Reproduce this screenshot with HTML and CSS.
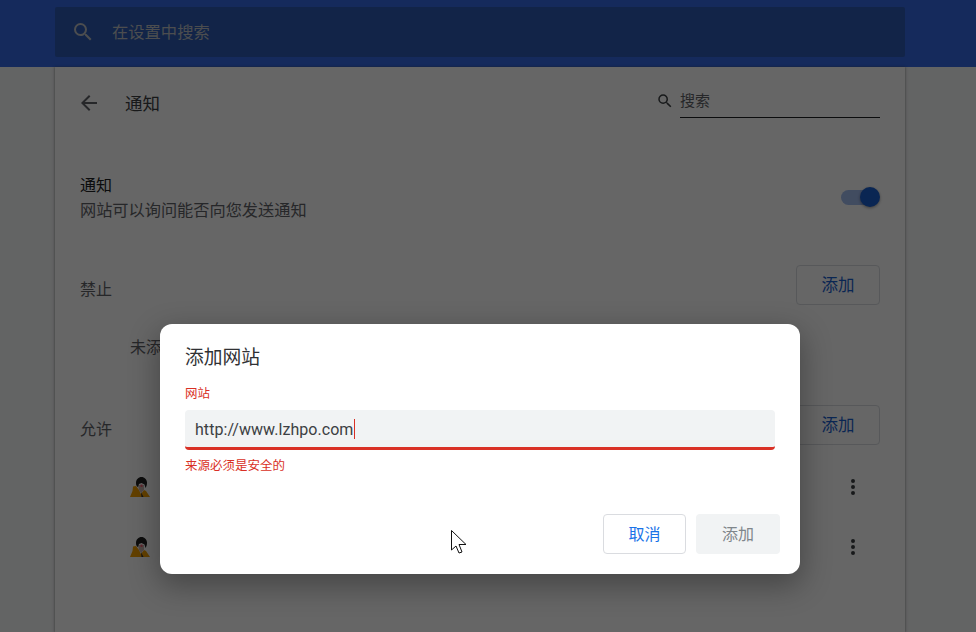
FILE: index.html
```html
<!DOCTYPE html>
<html lang="zh-CN">
<head>
<meta charset="utf-8">
<title>通知</title>
<link rel="stylesheet" href="styles.css">
</head>
<body>
<header class="topbar">
  <div class="topsearch">
    <svg class="topsearch-icon" viewBox="0 0 24 24"><path d="M15.5 14h-.79l-.28-.27A6.47 6.47 0 0 0 16 9.5 6.5 6.5 0 1 0 9.5 16c1.61 0 3.09-.59 4.23-1.57l.27.28v.79l5 4.99L20.49 19l-4.99-5zm-6 0C7.01 14 5 11.99 5 9.5S7.01 5 9.5 5 14 7.01 14 9.5 11.99 14 9.5 14z"/></svg>
    <span class="topsearch-text">在设置中搜索</span>
  </div>
</header>
<main class="card">
  <div class="subpage">
    <svg class="back" viewBox="0 0 24 24"><path d="M20 11H7.830l5.590-5.590L12 4l-8 8 8 8 1.410-1.410L7.830 13H20v-2z"/></svg>
    <h1 class="subpage-title">通知</h1>
    <div class="subsearch">
      <svg class="subsearch-icon" viewBox="0 0 24 24"><path d="M15.5 14h-.79l-.28-.27A6.47 6.47 0 0 0 16 9.5 6.5 6.5 0 1 0 9.5 16c1.61 0 3.09-.59 4.23-1.57l.27.28v.79l5 4.99L20.49 19l-4.99-5zm-6 0C7.01 14 5 11.99 5 9.5S7.01 5 9.5 5 14 7.01 14 9.5 11.99 14 9.5 14z"/></svg>
      <span class="subsearch-field">搜索</span>
    </div>
  </div>
  <section class="toggle-row">
    <div>
      <div class="toggle-title">通知</div>
      <div class="toggle-sub">网站可以询问能否向您发送通知</div>
    </div>
    <div class="switch"><span class="switch-track"></span><span class="switch-knob"></span></div>
  </section>
  <section class="group group-block">
    <div class="group-head"><span>禁止</span><button class="btn-add">添加</button></div>
    <div class="empty">未添加任何网站</div>
  </section>
  <section class="group group-allow">
    <div class="group-head"><span>允许</span><button class="btn-add">添加</button></div>
    <div class="site">
      <svg class="avatar" viewBox="0 0 20 20"><path class="av-coat" d="M0 20 2.500 14 3 9.500 6 9 9 13 11 17 14 13 16 14 20 20z"/><path class="av-skin" d="M8 8h6v5l-3 3-2-3z"/><path class="av-dot" d="M10.500 7.500h2v2.500h-2z"/><path class="av-hair" d="M6 6c0-3.500 2.500-6 5.500-6S17 2.500 17 5.500c0 2-.5 4-1.500 5.500l-1-3.500-3-1.500-2.500 1-1 3C6.500 9.500 6 8 6 6z"/><path class="av-line" d="M11 15l2.500 5h-2z"/></svg>
      <svg class="more" viewBox="0 0 24 24"><path d="M12 8a2 2 0 1 0 0-4 2 2 0 0 0 0 4zm0 2a2 2 0 1 0 0 4 2 2 0 0 0 0-4zm0 6a2 2 0 1 0 0 4 2 2 0 0 0 0-4z"/></svg>
    </div>
    <div class="site">
      <svg class="avatar" viewBox="0 0 20 20"><path class="av-coat" d="M0 20 2.500 14 3 9.500 6 9 9 13 11 17 14 13 16 14 20 20z"/><path class="av-skin" d="M8 8h6v5l-3 3-2-3z"/><path class="av-dot" d="M10.500 7.500h2v2.500h-2z"/><path class="av-hair" d="M6 6c0-3.500 2.500-6 5.500-6S17 2.500 17 5.500c0 2-.5 4-1.500 5.500l-1-3.500-3-1.500-2.500 1-1 3C6.500 9.500 6 8 6 6z"/><path class="av-line" d="M11 15l2.500 5h-2z"/></svg>
      <svg class="more" viewBox="0 0 24 24"><path d="M12 8a2 2 0 1 0 0-4 2 2 0 0 0 0 4zm0 2a2 2 0 1 0 0 4 2 2 0 0 0 0-4zm0 6a2 2 0 1 0 0 4 2 2 0 0 0 0-4z"/></svg>
    </div>
  </section>
</main>
<div class="scrim"></div>
<div class="dialog">
  <h2 class="dialog-title">添加网站</h2>
  <label class="field-label">网站</label>
  <div class="field"><span class="field-value">http://www.lzhpo.com</span><span class="caret"></span></div>
  <div class="field-error">来源必须是安全的</div>
  <div class="dialog-actions">
    <button class="btn-cancel">取消</button>
    <button class="btn-submit">添加</button>
  </div>
</div>
<svg class="pointer" viewBox="0 0 16 24"><path d="M.5.5V20L5 16l3 7 3-1-3-7.500h7z"/></svg>
</body>
</html>
```
FILE: styles.css
```css
* { box-sizing: border-box; }
html, body { margin: 0; height: 100%; overflow: hidden; }
body {
  background: #f8f9fa;
  font-family: Roboto, "Noto Sans CJK SC", sans-serif;
  font-size: 16px;
  color: #202124;
  width: 976px;
  height: 632px;
  position: relative;
}
.topbar {
  height: 67px;
  background: #3569e6;
  padding: 7px 71px 10px 55px;
}
.topsearch {
  height: 50px;
  border-radius: 2px;
  display: flex;
  align-items: center;
  padding-left: 16px;
  background: #2d5bb4;
}
.topsearch-icon { width: 24px; height: 24px; fill: #bdc1c6; }
.topsearch-text { margin-left: 17px; margin-top: -2px; font-size: 16.3px; color: #bdc1c6; }
.card {
  width: 850px;
  height: 565px;
  margin-left: 55px;
  background: #fff;
  box-shadow: 0 0 2px 0 rgba(60,64,67,.5), 0 1px 3px 1px rgba(60,64,67,.15);
  padding: 0 25px;
}
.subpage { display: flex; align-items: center; height: 72px; }
.back { width: 24px; height: 24px; fill: #5f6368; margin-left: -3px; }
.subpage-title { margin: -2px 0 0 24px; font-size: 17.5px; font-weight: 400; flex: 1; color: #3c4043; }
.subsearch { display: flex; align-items: center; margin-top: -4px; }
.subsearch-icon { width: 18px; height: 18px; fill: #3c4043; margin-right: 6px; }
.subsearch-field {
  width: 200px;
  height: 33px;
  line-height: 32px;
  border-bottom: 1px solid #202124;
  color: #5f6368;
  font-size: 15px;
}
.toggle-row {
  display: flex;
  justify-content: space-between;
  align-items: center;
  margin-top: 33px;
  height: 50px;
}
.toggle-title { line-height: 24px; margin-top: 2px; }
.toggle-sub { line-height: 25px; color: #5f6368; font-size: 16.2px; }
.switch { position: relative; width: 39px; height: 20px; }
.switch-track {
  position: absolute; left: 0; top: 3px; width: 32px; height: 15px;
  border-radius: 8px; background: #a3bdf0;
}
.switch-knob {
  position: absolute; right: 0; top: 0; width: 20px; height: 20px;
  border-radius: 50%; background: #1a5fd0;
  box-shadow: 0 1px 3px rgba(0,0,0,.4);
}
.group-head {
  display: flex;
  justify-content: space-between;
  align-items: center;
  height: 40px;
  font-size: 16px;
  color: #5f6368;
}
.group-head > span { margin-top: 6px; }
.group-block { margin-top: 43px; }
.group-allow { margin-top: 45px; }
.btn-add {
  width: 84px;
  height: 40px;
  border: 1px solid #dadce0;
  border-radius: 4px;
  background: #fff;
  color: #1a5fd0;
  font: inherit;
  font-size: 16.5px;
  padding: 0 0 2px;
}
.empty {
  margin: 31px 0 0 50px;
  width: 30px;
  height: 24px;
  overflow: hidden;
  white-space: nowrap;
  font-size: 16px;
  line-height: 24px;
  color: #5f6368;
}
.site {
  height: 60px;
  display: flex;
  align-items: center;
  justify-content: space-between;
  padding-left: 50px;
}
.group-head + .site { margin-top: 12px; }
.avatar { width: 20px; height: 20px; }
.av-coat { fill: #f4a100; }
.av-skin { fill: #c9b5b0; }
.av-dot { fill: #f06070; }
.av-hair { fill: #222; }
.av-line { fill: #333; }
.more { width: 24px; height: 24px; fill: #3c4043; margin-right: 15px; }
.scrim { position: absolute; inset: 0; background: rgba(0,0,0,.6); }
.dialog {
  position: absolute;
  left: 160px;
  top: 324px;
  width: 640px;
  height: 250px;
  background: #fff;
  border-radius: 12px;
  padding: 0 20px 20px 25px;
  box-shadow: 0 10px 30px 2px rgba(0,0,0,.32);
  display: flex;
  flex-direction: column;
}
.dialog-title {
  margin: 21px 0 0;
  font-size: 18.75px;
  font-weight: 400;
  line-height: 26px;
  color: #303134;
}
.field-label {
  margin-top: 15px;
  font-size: 12.5px;
  line-height: 16px;
  color: #d93025;
}
.field {
  width: 590px;
  height: 40px;
  margin-top: 8px;
  padding: 2px 0 0 10px;
  background: #f1f3f4;
  border-radius: 4px;
  border-bottom: 3px solid #d93025;
  display: flex;
  align-items: center;
  font-size: 16px;
  color: #3c4043;
}
.field-value { letter-spacing: .05px; }
.caret { width: 1px; height: 20px; background: #d93025; margin: -2px 0 0 1px; }
.field-error {
  margin-top: 8px;
  font-size: 12.5px;
  line-height: 16px;
  color: #d93025;
}
.dialog-actions { margin-top: auto; display: flex; justify-content: flex-end; gap: 10px; }
.btn-cancel, .btn-submit {
  height: 40px; border-radius: 4px; font: inherit; font-size: 16px; padding: 0 0 3px;
}
.btn-cancel { width: 83px; background: #fff; border: 1px solid #dadce0; color: #1a73e8; }
.btn-submit { width: 84px; background: #f1f3f4; border: 0; color: #80868b; }
.pointer {
  position: absolute; left: 451px; top: 530px; width: 16px; height: 24px;
  fill: #fff; stroke: #111; stroke-width: 1;
}
```
